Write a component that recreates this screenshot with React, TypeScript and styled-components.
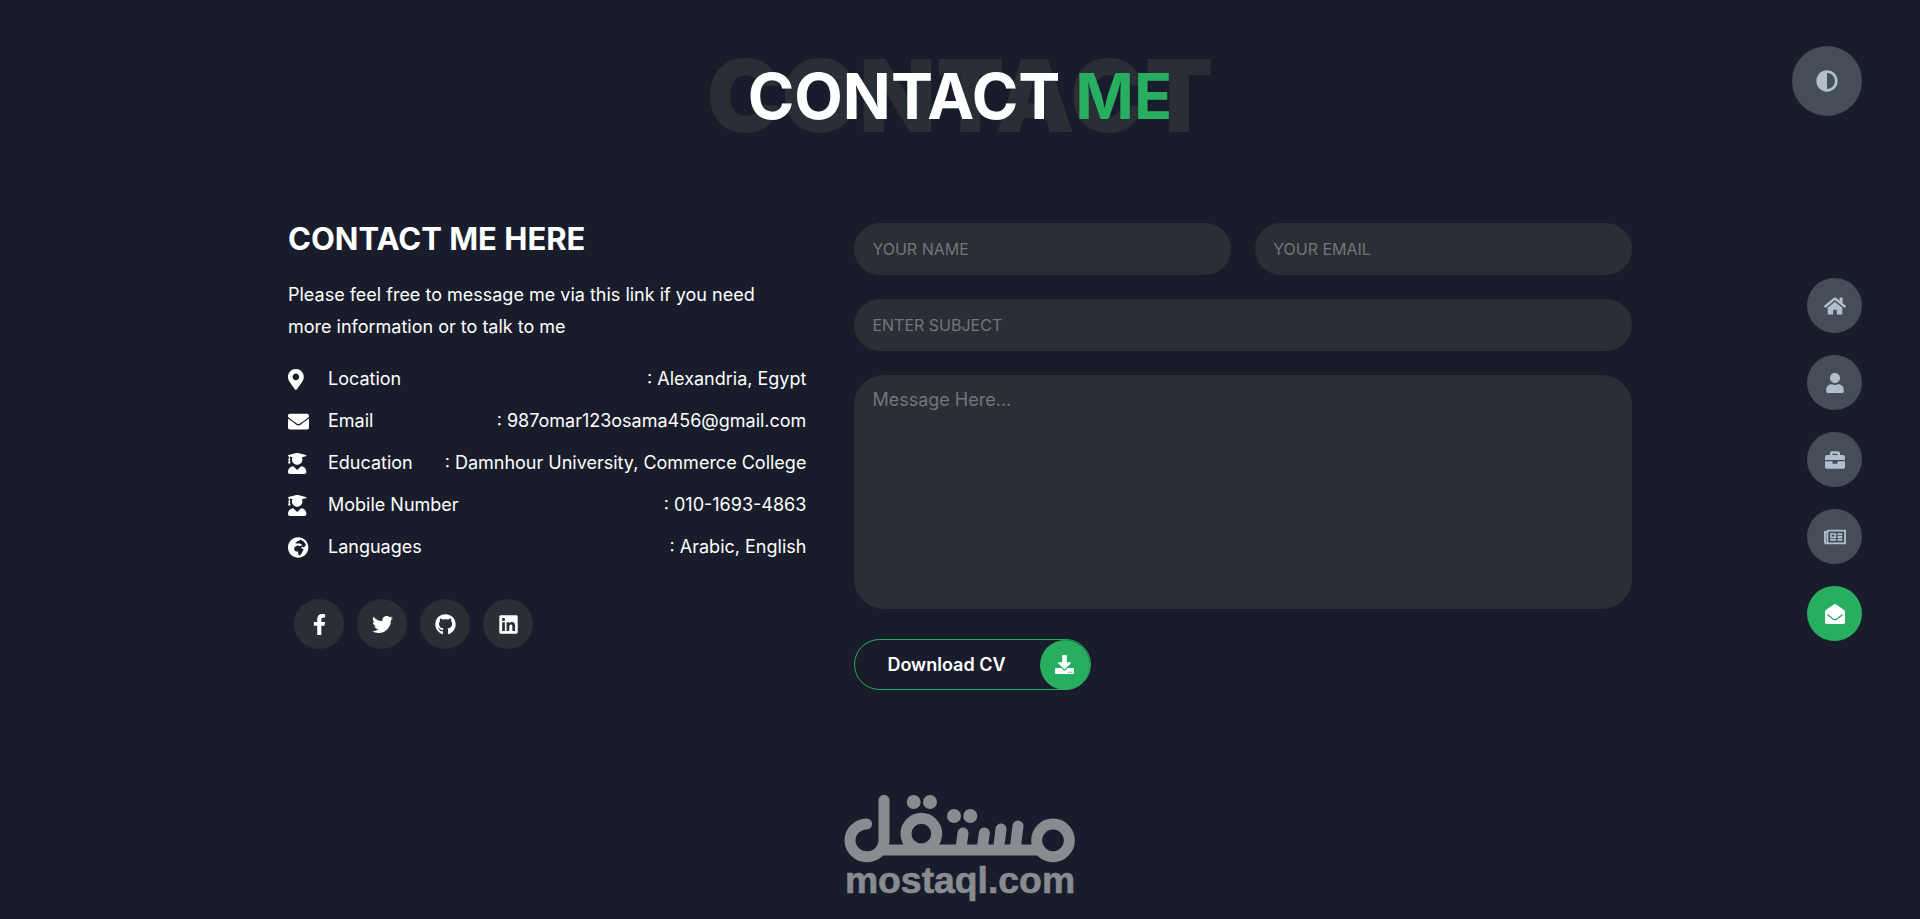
import React from "react";
import styled, { createGlobalStyle } from "styled-components";
import {
  FaAdjust,
  FaBriefcase,
  FaDownload,
  FaEnvelope,
  FaEnvelopeOpen,
  FaFacebookF,
  FaGithub,
  FaGlobeAfrica,
  FaHome,
  FaLinkedin,
  FaMapMarkerAlt,
  FaRegNewspaper,
  FaTwitter,
  FaUser,
  FaUserGraduate,
} from "react-icons/fa";

const color = {
  page: "#191d2b",
  accent: "#27ae60",
  white: "#ffffff",
  light: "#b2becd",
  control: "#454e56",
  field: "#2a2e35",
  hint: "#757578",
  logo: "#888b90",
};

const GlobalStyle = createGlobalStyle`
  *, *::before, *::after {
    box-sizing: border-box;
    margin: 0;
    padding: 0;
  }

  body {
    background: ${color.page};
    color: ${color.white};
    font-family: Inter, "Open Sans", sans-serif;
    font-size: 18px;
    line-height: 32px;
  }

  button, input, textarea {
    font: inherit;
    color: inherit;
  }
`;

const Page = styled.main`
  min-height: 100vh;
  padding: 40px 15% 16px;
`;

const Title = styled.header`
  display: grid;
  place-items: center;
  height: 112px;
  text-transform: uppercase;

  & > * {
    grid-area: 1 / 1;
  }
`;

const TitleShadow = styled.span`
  color: ${color.field};
  font-size: 100px;
  font-weight: 900;
  line-height: 112px;
`;

const TitleText = styled.h1`
  font-size: 63px;
  font-weight: 700;
  line-height: 72px;

  span {
    color: ${color.accent};
  }
`;

const Columns = styled.div`
  display: grid;
  grid-template-columns: 2fr 3fr;
  gap: 48px;
  margin-top: 71px;

  & > * {
    min-width: 0;
  }
`;

const Subtitle = styled.h2`
  font-size: 31px;
  font-weight: 700;
  line-height: 32px;
  text-transform: uppercase;
`;

const Intro = styled.p`
  margin-top: 24px;
  padding-right: 24px;
`;

const Details = styled.ul`
  display: grid;
  gap: 16px;
  margin-top: 23px;
  list-style: none;
`;

const Detail = styled.li`
  display: flex;
  justify-content: space-between;
  line-height: 26px;
  white-space: nowrap;
`;

const DetailLabel = styled.span`
  display: flex;
  align-items: center;
`;

const DetailIcon = styled.span`
  display: flex;
  width: 40px;
  font-size: 21px;
`;

const Socials = styled.nav`
  display: flex;
  gap: 13px;
  margin-top: 39px;
  padding: 0 6px;
`;

const SocialLink = styled.a`
  display: grid;
  place-items: center;
  width: 50px;
  height: 50px;
  border-radius: 50%;
  background: ${color.field};
  color: ${color.white};
  font-size: 21px;
`;

const Form = styled.form`
  display: grid;
  grid-template-columns: 1fr 1fr;
  gap: 24px;
`;

const Field = styled.input<{ $wide?: boolean }>`
  grid-column: ${(p) => (p.$wide ? "1 / -1" : "auto")};
  width: 100%;
  height: 52px;
  padding: 0 18px;
  border: 0;
  border-radius: 30px;
  outline: 0;
  background: ${color.field};
  font-size: 16px;

  &::placeholder {
    color: ${color.hint};
    opacity: 1;
    text-transform: uppercase;
  }
`;

const Message = styled.textarea`
  grid-column: 1 / -1;
  display: block;
  width: 100%;
  height: 234px;
  padding: 9px 18px;
  border: 0;
  border-radius: 30px;
  outline: 0;
  background: ${color.field};
  resize: none;

  &::placeholder {
    color: ${color.hint};
    opacity: 1;
  }
`;

const DownloadButton = styled.button`
  display: flex;
  align-items: center;
  justify-content: space-between;
  justify-self: start;
  gap: 34px;
  height: 51px;
  margin-top: 6px;
  padding-left: 32px;
  border: 1px solid ${color.accent};
  border-radius: 30px;
  background: transparent;
  font-weight: 600;
  cursor: pointer;
`;

const DownloadIcon = styled.span`
  display: grid;
  place-items: center;
  width: 50px;
  height: 50px;
  border-radius: 50%;
  background: ${color.accent};
  font-size: 19px;
`;

const Footer = styled.footer`
  display: flex;
  justify-content: center;
  margin-top: 104px;
`;

const ThemeToggle = styled.button`
  position: fixed;
  top: 5%;
  right: 3%;
  display: grid;
  place-items: center;
  width: 70px;
  height: 70px;
  border: 0;
  border-radius: 50%;
  background: ${color.control};
  color: ${color.light};
  font-size: 22px;
  cursor: pointer;
`;

const Controls = styled.nav`
  position: fixed;
  top: 0;
  right: 3%;
  bottom: 0;
  display: flex;
  flex-direction: column;
  justify-content: center;
  gap: 22px;
`;

const Control = styled.a<{ $active?: boolean }>`
  display: grid;
  place-items: center;
  width: 55px;
  height: 55px;
  border-radius: 50%;
  background: ${(p) => (p.$active ? color.accent : color.control)};
  color: ${(p) => (p.$active ? color.white : color.light)};
  font-size: 20px;
`;

const details = [
  { icon: FaMapMarkerAlt, label: "Location", value: "Alexandria, Egypt" },
  { icon: FaEnvelope, label: "Email", value: "987omar123osama456@gmail.com" },
  { icon: FaUserGraduate, label: "Education", value: "Damnhour University, Commerce College" },
  { icon: FaUserGraduate, label: "Mobile Number", value: "010-1693-4863" },
  { icon: FaGlobeAfrica, label: "Languages", value: "Arabic, English" },
];

const socials = [
  { icon: <FaFacebookF />, name: "Facebook" },
  { icon: <FaTwitter />, name: "Twitter" },
  { icon: <FaGithub />, name: "GitHub" },
  { icon: <FaLinkedin />, name: "LinkedIn" },
];

const controls = [
  { icon: <FaHome size={22} />, name: "Home" },
  { icon: <FaUser />, name: "About" },
  { icon: <FaBriefcase />, name: "Portfolio" },
  { icon: <FaRegNewspaper size={22} />, name: "Blog" },
  { icon: <FaEnvelopeOpen />, name: "Contact", active: true },
];

function MostaqlLogo() {
  return (
    <svg width="232" height="108" viewBox="42 43 696 324" fill={color.logo} role="img" aria-label="mostaql.com">
      <g fill="none" stroke={color.logo} strokeWidth="33" strokeLinecap="round">
        <circle cx="669" cy="182" r="49" />
        <circle cx="274" cy="162" r="46" />
        <path d="M162 62V182A51 49 0 1 1 110 133" />
        <path d="M150 211H640" strokeLinecap="butt" />
        <path d="M564 139L556 205M513 148L506 205M463 160L457 205M399 160L393 205" />
      </g>
      <circle cx="251" cy="67" r="21" />
      <circle cx="300" cy="67" r="21" />
      <circle cx="372" cy="109" r="21" />
      <circle cx="421" cy="109" r="21" />
      <text
        x="390"
        y="340"
        textAnchor="middle"
        fontFamily="'Liberation Sans', Arial, sans-serif"
        fontSize="112"
        fontWeight="700"
        stroke={color.logo}
        strokeWidth="2"
        strokeLinejoin="round"
      >
        mostaql.com
      </text>
    </svg>
  );
}

export default function App() {
  return (
    <>
      <GlobalStyle />
      <Page>
        <Title>
          <TitleShadow aria-hidden="true">Contact</TitleShadow>
          <TitleText>
            Contact <span>me</span>
          </TitleText>
        </Title>

        <Columns>
          <section>
            <Subtitle>Contact me here</Subtitle>
            <Intro>Please feel free to message me via this link if you need more information or to talk to me</Intro>
            <Details>
              {details.map(({ icon: Icon, label, value }) => (
                <Detail key={label}>
                  <DetailLabel>
                    <DetailIcon>
                      <Icon preserveAspectRatio="xMinYMid meet" />
                    </DetailIcon>
                    {label}
                  </DetailLabel>
                  <span>: {value}</span>
                </Detail>
              ))}
            </Details>
            <Socials aria-label="Social profiles">
              {socials.map((s) => (
                <SocialLink key={s.name} href="#" aria-label={s.name}>
                  {s.icon}
                </SocialLink>
              ))}
            </Socials>
          </section>

          <Form onSubmit={(e) => e.preventDefault()}>
            <Field type="text" placeholder="Your name" aria-label="Your name" />
            <Field type="email" placeholder="Your email" aria-label="Your email" />
            <Field $wide type="text" placeholder="Enter subject" aria-label="Subject" />
            <Message placeholder="Message Here..." aria-label="Message" />
            <DownloadButton type="button">
              Download CV
              <DownloadIcon>
                <FaDownload />
              </DownloadIcon>
            </DownloadButton>
          </Form>
        </Columns>

        <Footer>
          <MostaqlLogo />
        </Footer>
      </Page>

      <Controls aria-label="Sections">
        {controls.map((c) => (
          <Control key={c.name} href="#" $active={c.active} aria-label={c.name}>
            {c.icon}
          </Control>
        ))}
      </Controls>
      <ThemeToggle type="button" aria-label="Toggle theme">
        <FaAdjust />
      </ThemeToggle>
    </>
  );
}
